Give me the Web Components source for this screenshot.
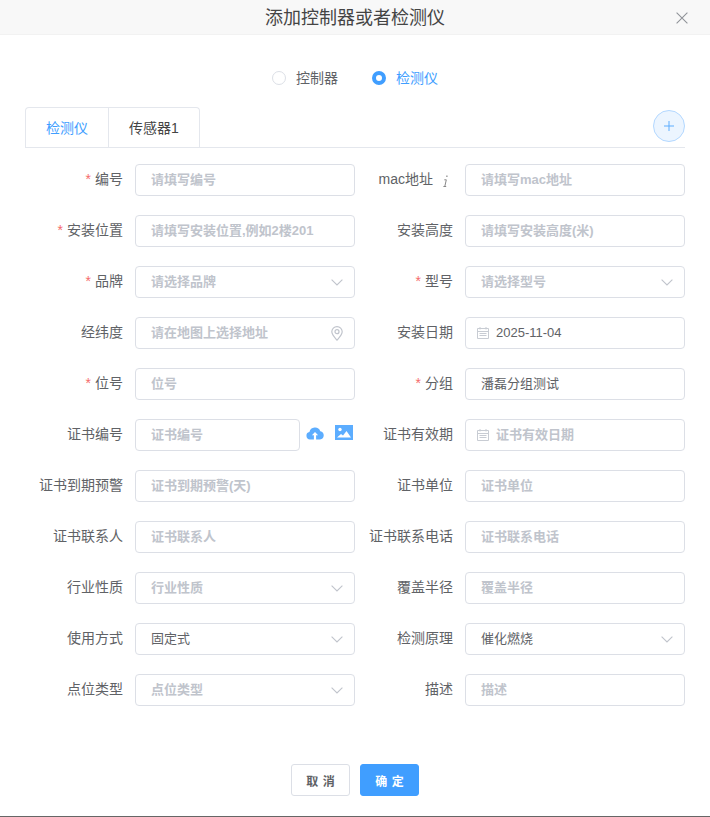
<!DOCTYPE html>
<html lang="zh">
<head>
<meta charset="utf-8">
<title>添加控制器或者检测仪</title>
<style>
	html, body { margin: 0; padding: 0; background: #fff; }
	body { font-family: "Liberation Sans", "Noto Sans CJK SC", sans-serif; color: #606266; }
</style>
</head>
<body>
<device-dialog heading="添加控制器或者检测仪">
	<radio-row></radio-row>
	<tab-bar></tab-bar>
	<form-grid>
		<form-field label="编号" required placeholder="请填写编号"></form-field>
		<form-field label="mac地址" info placeholder="请填写mac地址"></form-field>
		<form-field label="安装位置" required placeholder="请填写安装位置,例如2楼201"></form-field>
		<form-field label="安装高度" placeholder="请填写安装高度(米)"></form-field>
		<form-field label="品牌" required placeholder="请选择品牌" kind="select"></form-field>
		<form-field label="型号" required placeholder="请选择型号" kind="select"></form-field>
		<form-field label="经纬度" placeholder="请在地图上选择地址" kind="map"></form-field>
		<form-field label="安装日期" value="2025-11-04" kind="date"></form-field>
		<form-field label="位号" required placeholder="位号"></form-field>
		<form-field label="分组" required value="潘磊分组测试"></form-field>
		<form-field label="证书编号" placeholder="证书编号" kind="upload"></form-field>
		<form-field label="证书有效期" placeholder="证书有效日期" kind="date"></form-field>
		<form-field label="证书到期预警" placeholder="证书到期预警(天)"></form-field>
		<form-field label="证书单位" placeholder="证书单位"></form-field>
		<form-field label="证书联系人" placeholder="证书联系人"></form-field>
		<form-field label="证书联系电话" placeholder="证书联系电话"></form-field>
		<form-field label="行业性质" placeholder="行业性质" kind="select"></form-field>
		<form-field label="覆盖半径" placeholder="覆盖半径"></form-field>
		<form-field label="使用方式" value="固定式" kind="select"></form-field>
		<form-field label="检测原理" value="催化燃烧" kind="select"></form-field>
		<form-field label="点位类型" placeholder="点位类型" kind="select"></form-field>
		<form-field label="描述" placeholder="描述"></form-field>
	</form-grid>
</device-dialog>

<script>
const ICONS = {
	close: '<svg width="12" height="12" viewBox="0 0 12 12"><path d="M.6.6l10.8 10.8M11.4.6L.6 11.4" stroke="#909399" stroke-width="1.1" fill="none"/></svg>',
	plus: '<svg width="10" height="10" viewBox="0 0 10 10"><path d="M5 0v10M0 5h10" stroke="#5cadff" stroke-width="1" fill="none"/></svg>',
	arrow: '<svg width="12" height="7" viewBox="0 0 12 7"><path d="M.6.6L6 6l5.4-5.4" stroke="#c0c4cc" stroke-width="1.1" fill="none"/></svg>',
	date: '<svg width="12" height="12" viewBox="0 0 12 12"><path d="M.5 1.500h11v10H.5zM.5 4.500h11M3 0v2.500M9 0v2.500M2.500 6.500h7M2.500 8.500h7" stroke="#c8ccd3" stroke-width="1" fill="none"/></svg>',
	pin: '<svg width="12" height="15" viewBox="0 0 12 15"><path d="M6 14.200C3 10.800.8 8.500.8 5.800a5.200 5.200 0 0 1 10.400 0c0 2.700-2.200 5-5.200 8.400z" stroke="#c0c4cc" stroke-width="1.200" fill="none"/><circle cx="6" cy="5.700" r="2" stroke="#c0c4cc" stroke-width="1.200" fill="none"/></svg>',
	cloud: '<svg width="18" height="14" viewBox="0 0 18 14"><path d="M4 13.500a3.800 3.800 0 0 1-.6-7.500A5.700 5.700 0 0 1 14.300 5.200 4.200 4.200 0 0 1 14 13.500h-3.900V9.300h2L9 6 5.900 9.300h2v4.200z" fill="#5cadff"/></svg>',
	image: '<svg width="18" height="15" viewBox="0 0 18 15"><path d="M0 0h18v15H0z" fill="#5cadff"/><circle cx="5" cy="4.500" r="1.700" fill="#fff"/><path d="M2 12.500l4-3.500 2 1.500 3.500-4.500 4.500 6.500z" fill="#fff"/></svg>',
	info: '<svg width="5" height="12" viewBox="0 0 5 12"><path d="M3.300.5h1.200v1.400H3.300z" fill="#888"/><path d="M1.300 4.800h2L1.800 11.400M.4 11.500h2.800" stroke="#888" stroke-width="1" fill="none"/></svg>'
};

class DeviceDialog extends HTMLElement {
	constructor() {
		super();
		const root = this.attachShadow({mode: 'open'});
		root.innerHTML = `
			<style>
				:host { display: flex; flex-direction: column; height: 817px; box-sizing: border-box; border-bottom: 1px solid #666; background: #fff; }
				header { height: 35px; box-sizing: border-box; flex: none; display: flex; align-items: center; justify-content: center; position: relative; background: #f8f8f8; border-bottom: 1px solid #f2f2f2; padding-bottom: 3px; font-size: 18px; line-height: 24px; color: #444; font-family: "Noto Sans CJK SC", sans-serif; }
				.close { position: absolute; right: 22px; top: 12px; display: flex; }
				main { flex: 1; padding: 0 25px; }
				footer { display: flex; justify-content: center; gap: 10px; padding-bottom: 20px; }
				button { width: 59px; height: 32px; box-sizing: border-box; border-radius: 3px; font: bold 12px "Noto Sans CJK SC", sans-serif; letter-spacing: 1px; padding: 0 0 0 1px; }
				.cancel { background: #fff; border: 1px solid #dcdfe6; color: #606266; }
				.ok { background: #409eff; border: 1px solid #409eff; color: #fff; }
			</style>
			<header><span>${this.getAttribute('heading')}</span><span class="close">${ICONS.close}</span></header>
			<main><slot></slot></main>
			<footer><button class="cancel">取 消</button><button class="ok">确 定</button></footer>
		`;
	}
}

class RadioRow extends HTMLElement {
	constructor() {
		super();
		const root = this.attachShadow({mode: 'open'});
		root.innerHTML = `
			<style>
				:host { display: flex; justify-content: center; gap: 34px; padding-top: 32px; height: 40px; font: 14px/22px "Liberation Sans", "Noto Sans CJK SC", sans-serif; color: #606266; }
				label { display: flex; align-items: center; gap: 10px; height: 22px; }
				i { width: 14px; height: 14px; box-sizing: border-box; border-radius: 50%; border: 1px solid #dcdfe6; background: #fff; display: block; }
				.on { color: #409eff; }
				.on i { border: 4.500px solid #409eff; }
			</style>
			<label><i></i>控制器</label>
			<label class="on"><i></i>检测仪</label>
		`;
	}
}

class TabBar extends HTMLElement {
	constructor() {
		super();
		const root = this.attachShadow({mode: 'open'});
		root.innerHTML = `
			<style>
				:host { display: flex; justify-content: space-between; height: 41px; box-sizing: border-box; border-bottom: 1px solid #e4e7ed; font: 14px "Liberation Sans", "Noto Sans CJK SC", sans-serif; margin-bottom: 16px; position: relative; }
				.tabs { display: flex; height: 41px; box-sizing: border-box; border: 1px solid #e4e7ed; border-bottom: 0; border-radius: 4px 4px 0 0; }
				.tab { padding: 0 20px; line-height: 41px; color: #444; }
				.tab + .tab { border-left: 1px solid #e4e7ed; }
				.active { color: #409eff; box-shadow: 0 1px 0 #fff; }
				.add { position: absolute; right: 0; top: 3px; width: 32px; height: 32px; box-sizing: border-box; border-radius: 50%; border: 1px solid #b3d8ff; background: #ecf5ff; display: flex; align-items: center; justify-content: center; }
			</style>
			<div class="tabs"><div class="tab active">检测仪</div><div class="tab">传感器1</div></div>
			<div class="add">${ICONS.plus}</div>
		`;
	}
}

class FormGrid extends HTMLElement {
	constructor() {
		super();
		const root = this.attachShadow({mode: 'open'});
		root.innerHTML = `
			<style>
				:host { display: grid; grid-template-columns: 330px 330px; row-gap: 19px; }
			</style>
			<slot></slot>
		`;
	}
}

class FormField extends HTMLElement {
	constructor() {
		super();
		const root = this.attachShadow({mode: 'open'});
		const kind = this.getAttribute('kind') || 'text';
		const value = this.getAttribute('value');
		const text = value || this.getAttribute('placeholder') || '';
		const left = kind === 'date' ? `<span class="pre">${ICONS.date}</span>` : '';
		const right = kind === 'select' ? ICONS.arrow : kind === 'map' ? ICONS.pin : '';
		root.innerHTML = `
			<style>
				:host { display: flex; align-items: center; height: 32px; font: 14px/20px "Liberation Sans", "Noto Sans CJK SC", sans-serif; color: #606266; }
				.label { width: 98px; flex: none; box-sizing: border-box; text-align: right; white-space: nowrap; margin-right: 12px; display: flex; justify-content: flex-end; align-items: center; }
				.caption { margin-bottom: 2px; }
				.req { color: #f56c6c; margin-right: 4px; }
				.info { display: flex; margin: 2px 5px 0 10px; }
				.box { flex: 1; min-width: 0; height: 32px; box-sizing: border-box; border: 1px solid #dcdfe6; border-radius: 4px; background: #fff; display: flex; align-items: center; padding: 0 15px; font-size: 13px; white-space: nowrap; }
				.ph { color: #c0c4cc; font-weight: bold; margin-bottom: 1px; }
				.val { color: #606266; margin-bottom: 1px; }
				.date .val { margin-bottom: 0; }
				.pre { display: flex; margin: 0 7px 0 -4px; }
				.suf { display: flex; margin-left: auto; margin-right: -4px; }
				.actions { display: flex; align-items: center; gap: 11px; margin: 0 2px 5px 6px; }
				.actions span { display: flex; }
			</style>
			<span class="label"><span class="caption">${this.hasAttribute('required') ? '<span class="req">*</span>' : ''}${this.getAttribute('label')}</span>${this.hasAttribute('info') ? `<span class="info">${ICONS.info}</span>` : ''}</span>
			<div class="box ${kind}">${left}<span class="${value ? 'val' : 'ph'}">${text}</span>${right ? `<span class="suf">${right}</span>` : ''}</div>
			${kind === 'upload' ? `<div class="actions"><span>${ICONS.cloud}</span><span>${ICONS.image}</span></div>` : ''}
		`;
	}
}

customElements.define('device-dialog', DeviceDialog);
customElements.define('radio-row', RadioRow);
customElements.define('tab-bar', TabBar);
customElements.define('form-grid', FormGrid);
customElements.define('form-field', FormField);
</script>
</body>
</html>
